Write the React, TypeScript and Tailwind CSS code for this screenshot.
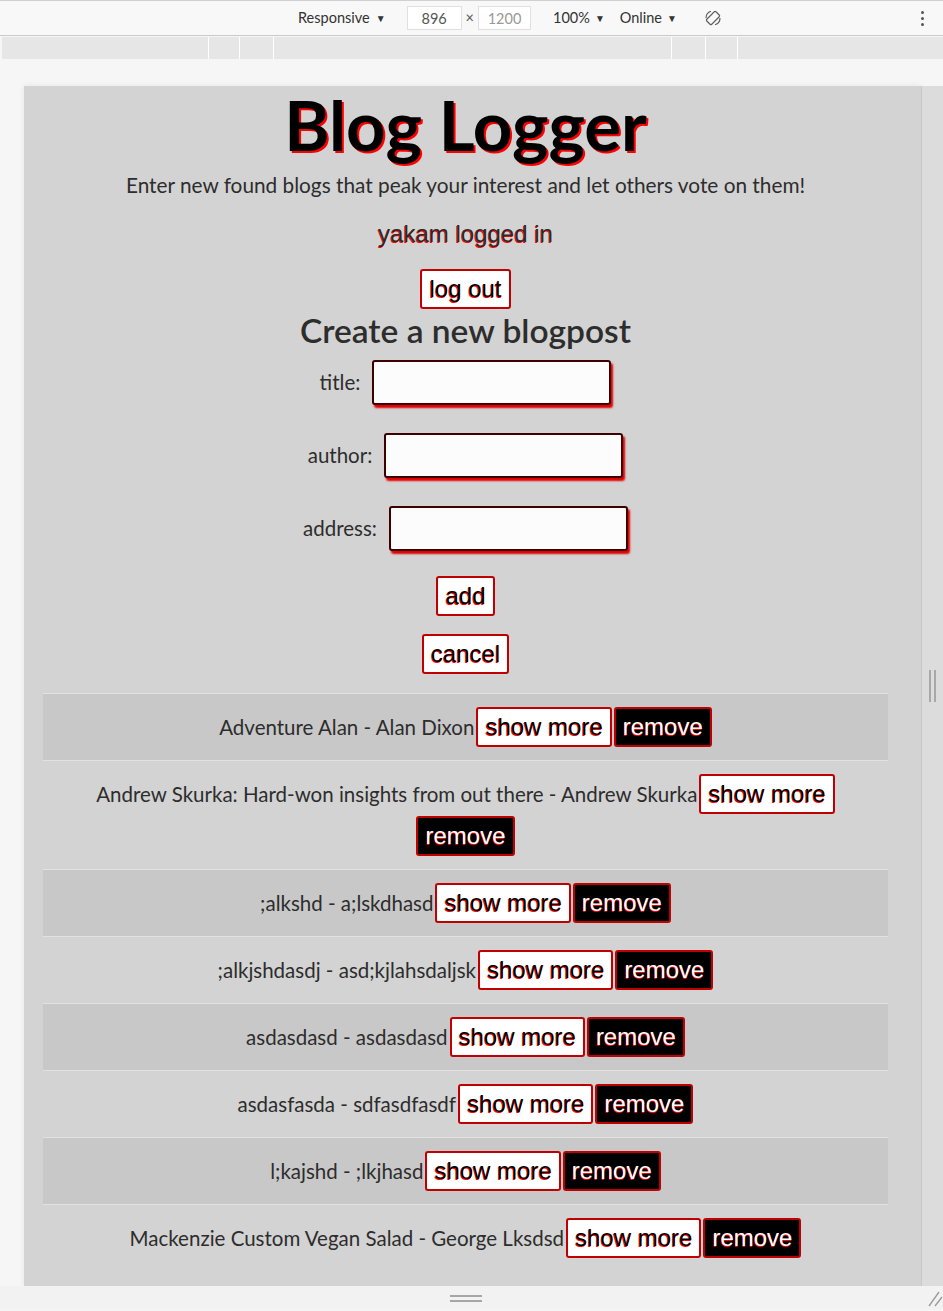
import clsx from "clsx";

const ubuntu = "font-['Lato','Noto_Sans',sans-serif]";
const arial = "font-['Liberation_Sans',Arial,sans-serif]";

const blogs = [
  { title: "Adventure Alan", author: "Alan Dixon" },
  { title: "Andrew Skurka: Hard-won insights from out there", author: "Andrew Skurka" },
  { title: ";alkshd", author: "a;lskdhasd" },
  { title: ";alkjshdasdj", author: "asd;kjlahsdaljsk" },
  { title: "asdasdasd", author: "asdasdasd" },
  { title: "asdasfasda", author: "sdfasdfasdf" },
  { title: "l;kajshd", author: ";lkjhasd" },
  { title: "Mackenzie Custom Vegan Salad", author: "George Lksdsd" },
];

function Btn({ label, dark }: { label: string; dark?: boolean }) {
  return (
    <button
      className={clsx(
        "h-[40px] px-[7px] border-2 border-[#c00000] rounded-[3px] text-[24px] leading-none [text-shadow:-0.6px_1px_0_#ff0000]",
        arial,
        dark ? "bg-black text-white" : "bg-white text-black"
      )}
    >
      {label}
    </button>
  );
}

function Field({ label }: { label: string }) {
  return (
    <div className="flex items-center justify-center gap-[12px]">
      <span className={clsx("text-[20.5px] text-[#2d2d2d]", ubuntu)}>{label}</span>
      <input className="w-[239px] h-[45px] bg-[#fcfcfc] border-2 border-[#3d0000] rounded-[3px] shadow-[2px_3px_2px_#e00000]" />
    </div>
  );
}

function RotateIcon() {
  return (
    <svg width="18" height="18" viewBox="0 0 18 18" fill="none" stroke="#5f5f5f" strokeWidth="1.2">
      <rect x="5.5" y="2.5" width="7" height="13" rx="1.2" transform="rotate(45 9 9)" />
      <path d="M2 9a7 7 0 0 1 5-6.7" />
      <path d="M16 9a7 7 0 0 1-5 6.7" />
    </svg>
  );
}

function Toolbar() {
  return (
    <div className={clsx("h-[36px] bg-[#f8f8f8] border-t border-[#d0d0d0] border-b border-b-[#cacaca] flex items-center text-[14.5px] text-[#333]", ubuntu)}>
      <div className="w-[298px]" />
      <span className="flex items-center gap-[6px]">Responsive <span className="text-[10px]">▼</span></span>
      <input
        readOnly
        value="896"
        className="ml-[21px] w-[55px] h-[24px] border border-[#e0e0e0] bg-white text-center text-[#555]"
      />
      <span className="mx-[4px] text-[#555]">×</span>
      <input
        readOnly
        value="1200"
        className="w-[53px] h-[24px] border border-[#e0e0e0] bg-white text-center text-[#999]"
      />
      <span className="ml-[22px] flex items-center gap-[5px]">100% <span className="text-[10px]">▼</span></span>
      <span className="ml-[15px] flex items-center gap-[5px]">Online <span className="text-[10px]">▼</span></span>
      <span className="ml-[27px] flex"><RotateIcon /></span>
      <div className="flex-1" />
      <span className="mr-[19px] flex flex-col gap-[3px]">
        <span className="w-[3px] h-[3px] rounded-full bg-[#555]" />
        <span className="w-[3px] h-[3px] rounded-full bg-[#555]" />
        <span className="w-[3px] h-[3px] rounded-full bg-[#555]" />
      </span>
    </div>
  );
}

function MediaBar() {
  const widths = [207, 31, 34, 398, 34, 32];
  return (
    <div className="ml-[2px] mt-px h-[22px] flex bg-[#e6e6e6]">
      {widths.map((w, i) => (
        <div key={i} className="h-full border-r border-white" style={{ width: w }} />
      ))}
      <div className="flex-1" />
    </div>
  );
}

export default function App() {
  return (
    <div className="w-[943px] h-[1311px] bg-[#f6f6f6] flex flex-col overflow-hidden">
      <Toolbar />
      <MediaBar />
      <div className="h-[27px]" />
      <div className="flex">
        <div className="ml-[24px] w-[897px] h-[1200px] bg-[#d3d3d3] flex shadow-[0_0_6px_rgba(0,0,0,0.08)]">
          <div className="w-[883px] flex flex-col items-center">
            <h1
              className={clsx(
                "mt-[7px] h-[64px] text-[69px] leading-[64px] font-bold text-black [text-shadow:2px_2px_0_#ff0000]",
                ubuntu
              )}
            >
              Blog Logger
            </h1>
            <p className={clsx("mt-[13px] h-[30px] leading-[30px] text-[20.8px] text-[#2d2d2d]", ubuntu)}>
              Enter new found blogs that peak your interest and let others vote on them!
            </p>
            <p className={clsx("mt-[19px] h-[30px] leading-[30px] text-[24px] text-[#2a2a2a] [text-shadow:-0.6px_1px_0_#ff0000]", arial)}>
              yakam logged in
            </p>
            <div className="mt-[20px]">
              <Btn label="log out" />
            </div>
            <h2 className={clsx("mt-[3px] h-[36px] leading-[36px] text-[33.5px] font-semibold text-[#2d2d2d]", ubuntu)}>
              Create a new blogpost
            </h2>
            <div className="mt-[12px] flex flex-col gap-[28px]">
              <Field label="title:" />
              <Field label="author:" />
              <Field label="address:" />
            </div>
            <div className="mt-[25px]">
              <Btn label="add" />
            </div>
            <div className="mt-[18px]">
              <Btn label="cancel" />
            </div>
            <div className="mt-[19px] w-[845px] flex flex-col">
              {blogs.map((b, i) => (
                <div
                  key={i}
                  className={clsx(
                    "border-t border-[#e2e2e2] py-[13px] px-[16px] flex flex-wrap justify-center items-center gap-[2px]",
                    i % 2 === 0 ? "bg-[#c8c8c8]" : "bg-[#d3d3d3]"
                  )}
                >
                  <span className={clsx("text-[20.5px] text-[#2d2d2d]", ubuntu)}>
                    {b.title} - {b.author}
                  </span>
                  <Btn label="show more" />
                  <Btn label="remove" dark />
                </div>
              ))}
            </div>
          </div>
        </div>
        <div className="w-[22px] h-[1200px] bg-[#dcdcdc] border-l border-[#c8c8c8] flex items-center justify-center gap-[3px]">
          <span className="w-[2px] h-[32px] bg-[#a8a8a8]" />
          <span className="w-[2px] h-[32px] bg-[#a8a8a8]" />
        </div>
      </div>
      <div className="h-[24px] bg-[#f2f2f2] flex items-start">
        <div className="w-[450px]" />
        <div className="mt-[9px] flex flex-col gap-[3px]">
          <span className="w-[32px] h-[2px] bg-[#a6a6a6]" />
          <span className="w-[32px] h-[2px] bg-[#a6a6a6]" />
        </div>
        <div className="flex-1" />
        <svg width="16" height="20" viewBox="0 0 16 20" className="mt-[2px]" stroke="#9a9a9a" strokeWidth="1.3">
          <line x1="2" y1="18" x2="12" y2="4" />
          <line x1="8" y1="18" x2="15" y2="9" />
        </svg>
      </div>
    </div>
  );
}
